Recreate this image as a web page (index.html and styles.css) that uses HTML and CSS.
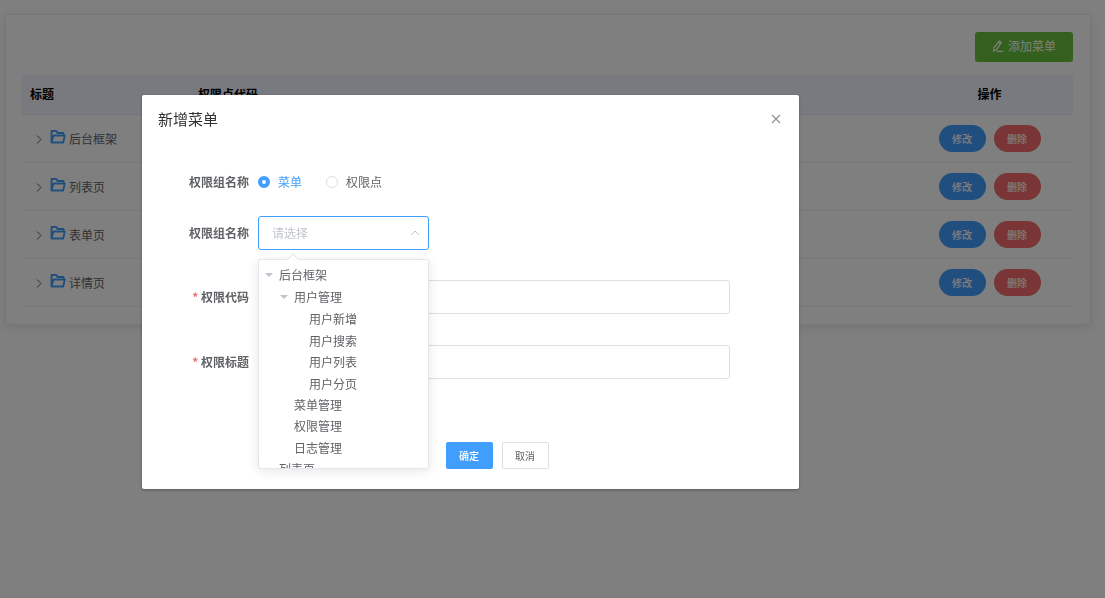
FILE: index.html
```html
<!DOCTYPE html>
<html lang="zh-CN">
<head>
<meta charset="utf-8">
<meta name="viewport" content="width=device-width, initial-scale=1">
<title>菜单管理</title>
<link rel="stylesheet" href="styles.css">
</head>
<body>
<svg class="sprite" aria-hidden="true">
  <symbol id="folder" viewBox="0 0 16 16">
    <path d="M1.5 13.5V2h4.8l1.2 2h6v2.5M1.5 13.5 3.6 6.5h11.2l-1.6 7z" fill="none" stroke="currentColor" stroke-width="1.8" stroke-linejoin="round"/>
  </symbol>
  <symbol id="chevron" viewBox="0 0 12 12">
    <path d="m4 2.5 4 4-4 4" fill="none" stroke="currentColor"/>
  </symbol>
</svg>

<main class="page">
  <section class="card">
    <div class="toolbar">
      <button class="btn btn-add" type="button">
        <svg class="icon-edit" viewBox="0 0 12 12" aria-hidden="true"><path d="M7.2 1 9.4 2.4 4.6 9.6 1.6 11l.3-3.2zM6.2 2.6l2.3 1.5M4.6 11.4h6.6" fill="none" stroke="currentColor" stroke-width="1.2"/></svg>
        <span>添加菜单</span>
      </button>
    </div>
    <table class="menu-table">
      <thead>
        <tr><th class="col-title">标题</th><th>权限点代码</th><th class="col-action">操作</th></tr>
      </thead>
      <tbody>
        <tr>
          <td><div class="node"><svg class="chevron"><use href="#chevron"/></svg><svg class="folder"><use href="#folder"/></svg><span>后台框架</span></div></td>
          <td></td>
          <td><div class="actions"><button class="btn pill edit" type="button">修改</button><button class="btn pill remove" type="button">删除</button></div></td>
        </tr>
        <tr>
          <td><div class="node"><svg class="chevron"><use href="#chevron"/></svg><svg class="folder"><use href="#folder"/></svg><span>列表页</span></div></td>
          <td></td>
          <td><div class="actions"><button class="btn pill edit" type="button">修改</button><button class="btn pill remove" type="button">删除</button></div></td>
        </tr>
        <tr>
          <td><div class="node"><svg class="chevron"><use href="#chevron"/></svg><svg class="folder"><use href="#folder"/></svg><span>表单页</span></div></td>
          <td></td>
          <td><div class="actions"><button class="btn pill edit" type="button">修改</button><button class="btn pill remove" type="button">删除</button></div></td>
        </tr>
        <tr>
          <td><div class="node"><svg class="chevron"><use href="#chevron"/></svg><svg class="folder"><use href="#folder"/></svg><span>详情页</span></div></td>
          <td></td>
          <td><div class="actions"><button class="btn pill edit" type="button">修改</button><button class="btn pill remove" type="button">删除</button></div></td>
        </tr>
      </tbody>
    </table>
  </section>
</main>

<div class="overlay">
  <div class="dialog" role="dialog" aria-modal="true" aria-labelledby="dialog-title">
    <header class="dialog-header">
      <h2 id="dialog-title">新增菜单</h2>
      <button class="close" type="button" aria-label="关闭"><svg viewBox="0 0 10 10"><path d="m1 1 8 8M9 1 1 9" fill="none" stroke="currentColor" stroke-width="1.2"/></svg></button>
    </header>
    <form class="form">
      <div class="field field-radio" role="radiogroup" aria-labelledby="type-label">
        <span class="label" id="type-label">权限组名称</span>
        <div class="radios">
          <label class="radio"><input type="radio" name="type" checked><span>菜单</span></label>
          <label class="radio"><input type="radio" name="type"><span>权限点</span></label>
        </div>
      </div>
      <div class="field field-select">
        <label class="label" for="group">权限组名称</label>
        <div class="select">
          <select id="group"><option>请选择</option></select>
          <svg class="select-arrow" viewBox="0 0 10 10" aria-hidden="true"><path d="m1 7 4-4 4 4" fill="none" stroke="currentColor"/></svg>
          <div class="popover">
            <ul class="tree">
              <li><div class="tree-row open">后台框架</div>
                <ul>
                  <li><div class="tree-row open">用户管理</div>
                    <ul>
                      <li><div class="tree-row">用户新增</div></li>
                      <li><div class="tree-row">用户搜索</div></li>
                      <li><div class="tree-row">用户列表</div></li>
                      <li><div class="tree-row">用户分页</div></li>
                    </ul>
                  </li>
                  <li><div class="tree-row">菜单管理</div></li>
                  <li><div class="tree-row">权限管理</div></li>
                  <li><div class="tree-row">日志管理</div></li>
                </ul>
              </li>
              <li><div class="tree-row">列表页</div></li>
            </ul>
          </div>
        </div>
      </div>
      <div class="field">
        <label class="label required" for="code">权限代码</label>
        <input class="text" id="code" type="text" required>
      </div>
      <div class="field">
        <label class="label required" for="name">权限标题</label>
        <input class="text" id="name" type="text" required>
      </div>
      <div class="form-actions">
        <button class="btn small confirm" type="button">确定</button>
        <button class="btn small cancel" type="button">取消</button>
      </div>
    </form>
  </div>
</div>
</body>
</html>
```

FILE: styles.css
```css
*,
*::before {
  box-sizing: border-box;
}

body {
  margin: 0;
  background: #fff;
  color: #606266;
  font: 12px/20px "Noto Sans CJK SC", "Microsoft YaHei", sans-serif;
}

button,
input,
select {
  font: inherit;
}

h2,
ul {
  margin: 0;
  padding: 0;
  list-style: none;
}

.sprite {
  display: none;
}

.page {
  padding: 14px 14px 14px 5px;
}

.card {
  padding: 17px 17px 17px 16px;
  border: 1px solid #ebeef5;
  border-radius: 4px;
  background: #fff;
  box-shadow: 0 2px 12px rgba(0, 0, 0, 0.1);
}

.toolbar {
  display: flex;
  justify-content: flex-end;
  margin-bottom: 13px;
}

.btn {
  display: inline-flex;
  align-items: center;
  justify-content: center;
  padding: 0;
  border: 0;
  border-radius: 3px;
  color: #fff;
  line-height: 16px;
  cursor: pointer;
}

.btn-add {
  gap: 4px;
  width: 98px;
  height: 30px;
  padding-bottom: 2px;
  background: #67c23a;
}

.icon-edit {
  width: 12px;
  height: 12px;
}

.menu-table {
  width: 100%;
  border-collapse: separate;
  border-spacing: 0;
  table-layout: fixed;
}

.menu-table th {
  height: 40px;
  padding: 0 8px 2px;
  border-bottom: 1px solid #ebeef5;
  background: #f2f5ff;
  color: #000;
  font-weight: 700;
  text-align: left;
}

.menu-table .col-title {
  width: 168px;
}

.menu-table .col-action {
  width: 167px;
  text-align: center;
}

.menu-table td {
  height: 48px;
  padding: 0 8px;
  border-bottom: 1px solid #ebeef5;
}

.node {
  display: flex;
  align-items: center;
  padding-left: 3px;
}

.chevron {
  width: 12px;
  height: 12px;
  margin-right: 5px;
  color: #606266;
}

.folder {
  width: 16px;
  height: 16px;
  margin: 0 3px 4px 0;
  color: #409eff;
}

.actions {
  display: flex;
  justify-content: center;
  gap: 8px;
}

.pill {
  width: 47px;
  height: 27px;
  border-radius: 14px;
  font-size: 10px;
  font-weight: 500;
}

.edit,
.confirm {
  background: #409eff;
}

.remove {
  background: #f56c6c;
}

.overlay {
  position: fixed;
  inset: 0;
  padding: 95px 306px 0 142px;
  overflow: auto;
  background: rgba(0, 0, 0, 0.5);
}

.dialog {
  padding: 14px 16px 20px;
  border-radius: 2px;
  background: #fff;
  box-shadow: 0 1px 3px rgba(0, 0, 0, 0.3);
}

.dialog-header {
  display: flex;
  align-items: center;
  justify-content: space-between;
}

.dialog-header h2 {
  color: #303133;
  font-size: 15px;
  font-weight: 400;
  line-height: 20px;
}

.close {
  display: flex;
  padding: 2px;
  border: 0;
  background: none;
  color: #909399;
}

.close svg {
  width: 10px;
  height: 10px;
}

.form {
  padding: 36px 53px 0 24px;
}

.field {
  display: grid;
  grid-template-columns: 67px 1fr;
  gap: 9px;
  align-items: center;
  margin-bottom: 31px;
}

.field-radio {
  height: 34px;
  margin-bottom: 17px;
}

.field-select {
  margin-bottom: 30px;
}

.label {
  padding-bottom: 1px;
  font-weight: 700;
  text-align: right;
}

.required::before {
  content: "* ";
  color: #f56c6c;
}

.radios {
  display: flex;
  gap: 24px;
}

.radio {
  display: flex;
  align-items: center;
  gap: 8px;
}

.radio input {
  appearance: none;
  width: 12px;
  height: 12px;
  margin: 0;
  border: 1px solid #dcdfe6;
  border-radius: 50%;
  background: #fff;
}

.radio input:checked {
  border: 4px solid #409eff;
}

.radio input:checked + span {
  color: #409eff;
}

.select {
  position: relative;
  width: 171px;
}

.select select {
  display: block;
  appearance: none;
  width: 100%;
  height: 34px;
  padding: 0 30px 0 13px;
  border: 1px solid #409eff;
  border-radius: 3px;
  outline: 0;
  background: #fff;
  color: #c0c4cc;
}

.select-arrow {
  position: absolute;
  top: 12px;
  right: 9px;
  width: 10px;
  height: 10px;
  color: #c0c4cc;
  pointer-events: none;
}

.popover {
  position: absolute;
  z-index: 1;
  top: 43px;
  left: 0;
  width: 100%;
  border: 1px solid #e4e7ed;
  border-radius: 3px;
  background: #fff;
  box-shadow: 0 2px 12px rgba(0, 0, 0, 0.1);
}

.popover::before {
  position: absolute;
  top: -5px;
  left: 30px;
  width: 8px;
  height: 8px;
  border: 1px solid #e4e7ed;
  border-width: 1px 0 0 1px;
  background: #fff;
  content: "";
  transform: rotate(45deg);
}

.tree {
  height: 208px;
  padding: 4px 0 0 6px;
  overflow: hidden;
}

.tree ul {
  padding-left: 15px;
}

.tree-row {
  display: flex;
  align-items: center;
  line-height: 22px;
}

.tree li:nth-child(even) > .tree-row {
  line-height: 21px;
}

.tree-row::before {
  width: 8px;
  margin-right: 6px;
  border: 4px solid transparent;
  border-bottom-width: 0;
  content: "";
}

.tree-row.open::before {
  border-top-color: #c0c4cc;
}

.text {
  width: 100%;
  height: 34px;
  padding: 0 13px;
  border: 1px solid #dcdfe6;
  border-radius: 3px;
  outline: 0;
  background: #fff;
}

.form-actions {
  display: flex;
  justify-content: center;
  gap: 9px;
  padding: 32px 0 0 82px;
}

.small {
  width: 47px;
  height: 27px;
  border-radius: 2px;
  font-size: 10px;
}

.confirm {
  font-weight: 500;
}

.cancel {
  border: 1px solid #dcdfe6;
  background: #fff;
  color: #606266;
}
```
